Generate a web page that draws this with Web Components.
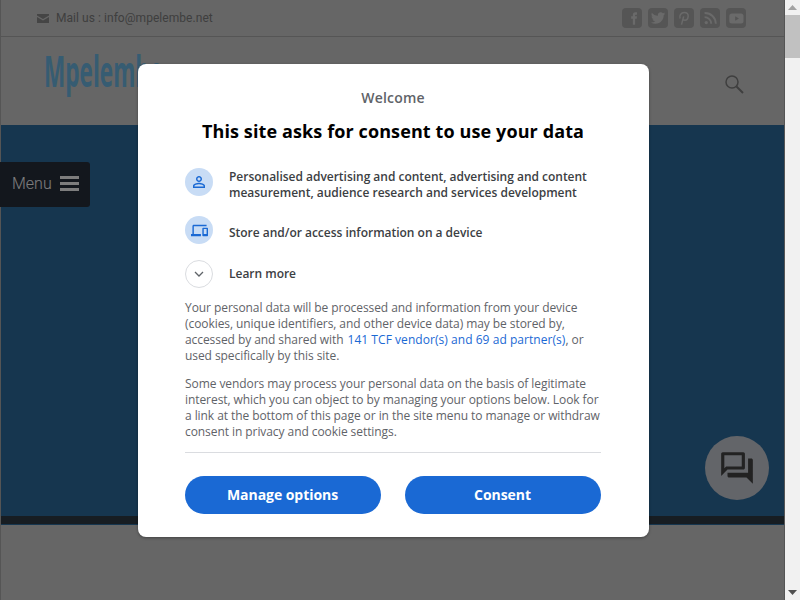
<!DOCTYPE html>
<html lang="en">
<head>
<meta charset="utf-8">
<title>Mpelembe</title>
<style>
  html, body { margin: 0; height: 600px; overflow: hidden; background: #fff; }
  body { display: flex; font-family: "Roboto", sans-serif; }
  page-shell { flex: 1; min-width: 0; display: block; background: #ccc; border: solid #aaa; border-width: 0 1px; }
</style>
</head>
<body>
<page-shell>
  <site-topbar></site-topbar>
  <site-masthead></site-masthead>
  <site-hero></site-hero>
  <chat-fab></chat-fab>
  <consent-overlay>
    <consent-item icon="person">Personalised advertising and content, advertising and content measurement, audience research and services development</consent-item>
    <consent-item icon="devices" style="--text-top: 9px">Store and/or access information on a device</consent-item>
    <consent-item icon="chevron" style="--text-top: 6px">Learn more</consent-item>
  </consent-overlay>
</page-shell>
<fake-scrollbar></fake-scrollbar>

<script>
const ICONS = {
  person: '<svg width="18" height="18" viewBox="0 0 24 24" fill="#1a69d4"><path d="M12 5.9c1.16 0 2.1.94 2.1 2.1s-.94 2.1-2.1 2.1S9.9 9.16 9.9 8s.94-2.1 2.1-2.1m0 9c2.97 0 6.1 1.46 6.1 2.1v1.1H5.9V17c0-.64 3.13-2.1 6.1-2.1M12 4C9.79 4 8 5.79 8 8s1.79 4 4 4 4-1.79 4-4-1.79-4-4-4zm0 9c-2.67 0-8 1.34-8 4v3h16v-3c0-2.66-5.33-4-8-4z"/></svg>',
  devices: '<svg width="17" height="17" viewBox="0 0 24 24" fill="#1a69d4"><path d="M4 6h18V4H4c-1.1 0-2 .9-2 2v11H0v3h14v-3H4V6zm19 2h-6c-.55 0-1 .45-1 1v10c0 .55.45 1 1 1h6c.55 0 1-.45 1-1V9c0-.55-.45-1-1-1zm-1 9h-4v-7h4v7z"/></svg>',
  chevron: '<svg width="12" height="12" viewBox="0 0 12 12" fill="none" stroke="#5f6368" stroke-width="1.3"><path d="M2 4l4 4 4-4"/></svg>'
};

const SOCIAL = [
  '<path d="M13 20v-7h-2v-3h2V8c0-2 1-3 3-3h2v3h-1.500c-.6 0-.9.300-.9 1v1H18l-.4 3h-1.900v7z"/>',
  '<g transform="translate(3.500 3.500) scale(.71)"><path d="M23.953 4.570a10 10 0 01-2.825.775 4.958 4.958 0 002.163-2.723c-.951.555-2.005.959-3.127 1.184a4.920 4.920 0 00-8.384 4.482C7.690 8.095 4.067 6.130 1.640 3.162a4.822 4.822 0 00-.666 2.475c0 1.710.870 3.213 2.188 4.096a4.904 4.904 0 01-2.228-.616v.060a4.923 4.923 0 003.946 4.827 4.996 4.996 0 01-2.212.085 4.936 4.936 0 004.604 3.417 9.867 9.867 0 01-6.102 2.105c-.390 0-.779-.023-1.170-.067a13.995 13.995 0 007.557 2.209c9.053 0 13.998-7.496 13.998-13.985 0-.210 0-.420-.015-.630A9.935 9.935 0 0024 4.590z"/></g>',
  '<path fill="none" stroke="currentColor" stroke-width="1.800" d="M9 20l2.600-10M7.300 12.500C6 9 8.500 5.300 12.300 5.300c3.300 0 5 2.200 4.700 4.800-.3 2.800-2 4.700-4 4.700-1.200 0-2-.6-2.300-1.500"/>',
  '<circle cx="7.500" cy="17.500" r="2"/><path fill="none" stroke="currentColor" stroke-width="2.200" d="M5.500 11a8 8 0 018 8M5.500 6a13 13 0 0113.500 13"/>',
  '<rect x="4" y="6.500" width="17" height="12" rx="3"/><path d="M11 9.800v5.400l4.500-2.700z" fill="var(--sq)"/>'
];

class SiteTopbar extends HTMLElement {
  constructor() {
    super();
    this.attachShadow({ mode: 'open' });
  }

  connectedCallback() {
    const links = SOCIAL.map(p => `<a><svg width="20" height="20" viewBox="0 0 24 24" fill="currentColor">${p}</svg></a>`).join('');
    this.shadowRoot.innerHTML = `
      <style>
        :host {
          display: flex;
          align-items: center;
          justify-content: space-between;
          height: 36px;
          padding: 0 38px 0 36px;
          border-bottom: 1px solid #aaa;
          font: 12px "Roboto", sans-serif;
          color: #7e7e7e;
        }
        .mail { display: flex; align-items: center; gap: 7px; letter-spacing: .05px; }
        .social { display: flex; gap: 6px; }
        a {
          --sq: #aaa;
          width: 20px;
          height: 20px;
          border-radius: 4px;
          background: var(--sq);
          color: #d4d4d4;
          display: block;
        }
        svg { display: block; }
      </style>
      <div class="mail">
        <svg width="12" height="9" viewBox="0 0 12 9" fill="#8a8a8a"><path d="M0 0h12v1.500L6 5 0 1.500zM0 3l6 3.500L12 3v6H0z"/></svg>
        <span>Mail us : info@mpelembe.net</span>
      </div>
      <div class="social">${links}</div>
    `;
  }
}

class SiteMasthead extends HTMLElement {
  constructor() {
    super();
    this.attachShadow({ mode: 'open' });
  }

  connectedCallback() {
    this.shadowRoot.innerHTML = `
      <style>
        :host {
          display: flex;
          align-items: center;
          justify-content: space-between;
          height: 88px;
          padding: 0 39px 0 43px;
          box-sizing: border-box;
        }
        .logo {
          font: 700 43px "Open Sans", sans-serif;
          color: #6cb8e4;
          transform: scaleX(.525);
          transform-origin: left center;
          margin-top: -21px;
          white-space: nowrap;
        }
        svg { display: block; margin-top: 8px; }
      </style>
      <div class="logo">Mpelembe</div>
      <svg width="20" height="20" viewBox="0 0 20 20" fill="none" stroke="#7e7e7e"><circle cx="7" cy="7" r="6" stroke-width="1.500"/><path d="M11.500 11.500l6.500 6.500" stroke-width="2"/></svg>
    `;
  }
}

class SiteHero extends HTMLElement {
  constructor() {
    super();
    this.attachShadow({ mode: 'open' });
  }

  connectedCallback() {
    this.shadowRoot.innerHTML = `
      <style>
        :host {
          display: flex;
          flex-direction: column;
          justify-content: flex-end;
          height: 400px;
          background: #2c6c9e;
          position: relative;
        }
        .band { height: 8px; margin-bottom: 1px; background: #2e3a44; }
        .menu {
          position: absolute;
          left: -1px;
          top: 37px;
          width: 90px;
          height: 45px;
          box-sizing: border-box;
          padding: 0 0 2px 12px;
          display: flex;
          align-items: center;
          gap: 8px;
          background: #262e3a;
          border-radius: 0 3px 3px 0;
          color: #fafafa;
          font: 300 16px "Roboto", sans-serif;
        }
        .bars { width: 19px; height: 15px; display: flex; flex-direction: column; justify-content: space-between; }
        .bars i { display: block; height: 3px; background: #fafafa; }
      </style>
      <div class="menu"><span>Menu</span><div class="bars"><i></i><i></i><i></i></div></div>
      <div class="band"></div>
    `;
  }
}

class ChatFab extends HTMLElement {
  constructor() {
    super();
    this.attachShadow({ mode: 'open' });
  }

  connectedCallback() {
    this.shadowRoot.innerHTML = `
      <style>
        :host {
          position: absolute;
          left: 705px;
          top: 436px;
          width: 64px;
          height: 64px;
          border-radius: 50%;
          background: #c6cad2;
          display: flex;
          align-items: center;
          justify-content: center;
        }
        svg { display: block; }
      </style>
      <svg width="38" height="38" viewBox="0 0 24 24" fill="#444"><path d="M15 4v7H5.170L4 12.170V4h11m1-2H3c-.55 0-1 .45-1 1v14l4-4h10c.55 0 1-.45 1-1V3c0-.55-.45-1-1-1zm5 4h-2v9H6v2c0 .55.45 1 1 1h11l4 4V7c0-.55-.45-1-1-1z"/></svg>
    `;
  }
}

class ConsentItem extends HTMLElement {
  constructor() {
    super();
    this.attachShadow({ mode: 'open' });
  }

  connectedCallback() {
    const icon = this.getAttribute('icon');
    const outlined = icon === 'chevron';
    this.shadowRoot.innerHTML = `
      <style>
        :host {
          display: flex;
          align-items: flex-start;
          gap: 16px;
          font: 600 12px/16px "Open Sans", sans-serif;
          letter-spacing: -.02px;
          color: #3c4043;
        }
        .ic {
          flex: none;
          width: 28px;
          height: 28px;
          box-sizing: border-box;
          border-radius: 50%;
          display: flex;
          align-items: center;
          justify-content: center;
          background: ${outlined ? '#fff' : '#c8dcf5'};
          border: ${outlined ? '1px solid #dadce0' : '0'};
        }
        .label { padding-top: var(--text-top, 1px); margin-bottom: -1px; }
        svg { display: block; }
      </style>
      <div class="ic">${ICONS[icon]}</div>
      <div class="label"><slot></slot></div>
    `;
  }
}

class ConsentOverlay extends HTMLElement {
  constructor() {
    super();
    this.attachShadow({ mode: 'open' });
  }

  connectedCallback() {
    this.shadowRoot.innerHTML = `
      <style>
        :host {
          position: absolute;
          left: 0;
          top: 0;
          width: 785px;
          height: 600px;
          background: rgba(0, 0, 0, .5);
          font-family: "Open Sans", sans-serif;
        }
        .dialog {
          position: absolute;
          left: 137.5px;
          top: 63.5px;
          width: 511px;
          height: 473px;
          box-sizing: border-box;
          padding: 24.5px 47.5px 0;
          background: #fff;
          border-radius: 8px;
          box-shadow: 0 1px 3px rgba(0, 0, 0, .35);
          display: flex;
          flex-direction: column;
        }
        .welcome { text-align: center; font: 600 14px/20px "Open Sans", sans-serif; letter-spacing: .2px; color: #5f6368; }
        h1 { margin: 10px 0 0; text-align: center; font: 700 18px/26px "Open Sans", sans-serif; letter-spacing: .11px; color: #000; }
        .items { margin-top: 24px; display: flex; flex-direction: column; gap: 16px; }
        p { margin: 0; font-size: 12px; line-height: 16px; letter-spacing: -.07px; color: #5f6368; }
        .copy { margin-top: 12px; display: flex; flex-direction: column; gap: 12px; }
        a { color: #1a69d4; letter-spacing: .05px; margin-left: 1px; }
        hr { border: 0; border-top: 1px solid #dadce0; margin: 12px 0 0; }
        .actions { margin-top: 23px; display: flex; gap: 24px; }
        button {
          flex: 1;
          height: 38px;
          border: 0;
          border-radius: 19px;
          background: #1a69d4;
          color: #fff;
          font: 700 14px "Open Sans", sans-serif;
          letter-spacing: -.05px;
          padding: 0 1px 2px 0;
        }
      </style>
      <div class="dialog">
        <div class="welcome">Welcome</div>
        <h1>This site asks for consent to use your data</h1>
        <div class="items"><slot></slot></div>
        <div class="copy">
          <p>Your personal data will be processed and information from your device (cookies, unique identifiers, and other device data) may be stored by, accessed by and shared with <a>141 TCF vendor(s) and 69 ad partner(s)</a>, or used specifically by this site.</p>
          <p>Some vendors may process your personal data on the basis of legitimate interest, which you can object to by managing your options below. Look for a link at the bottom of this page or in the site menu to manage or withdraw consent in privacy and cookie settings.</p>
        </div>
        <hr>
        <div class="actions"><button>Manage options</button><button>Consent</button></div>
      </div>
    `;
  }
}

class FakeScrollbar extends HTMLElement {
  constructor() {
    super();
    this.attachShadow({ mode: 'open' });
  }

  connectedCallback() {
    this.shadowRoot.innerHTML = `
      <style>
        :host {
          flex: none;
          width: 15px;
          height: 600px;
          background: #f1f1f1;
          display: flex;
          flex-direction: column;
          align-items: center;
          justify-content: space-between;
          position: relative;
        }
        .thumb { position: absolute; left: 0; top: 15px; width: 15px; height: 43px; background: #c1c1c1; }
        svg { display: block; margin: 5px 0; }
      </style>
      <svg width="9" height="5" viewBox="0 0 9 5" fill="#a3a3a3"><path d="M4.500 0L9 5H0z"/></svg>
      <div class="thumb"></div>
      <svg width="9" height="5" viewBox="0 0 9 5" fill="#505050"><path d="M0 0h9L4.500 5z"/></svg>
    `;
  }
}

customElements.define('site-topbar', SiteTopbar);
customElements.define('site-masthead', SiteMasthead);
customElements.define('site-hero', SiteHero);
customElements.define('chat-fab', ChatFab);
customElements.define('consent-item', ConsentItem);
customElements.define('consent-overlay', ConsentOverlay);
customElements.define('fake-scrollbar', FakeScrollbar);
</script>
</body>
</html>
